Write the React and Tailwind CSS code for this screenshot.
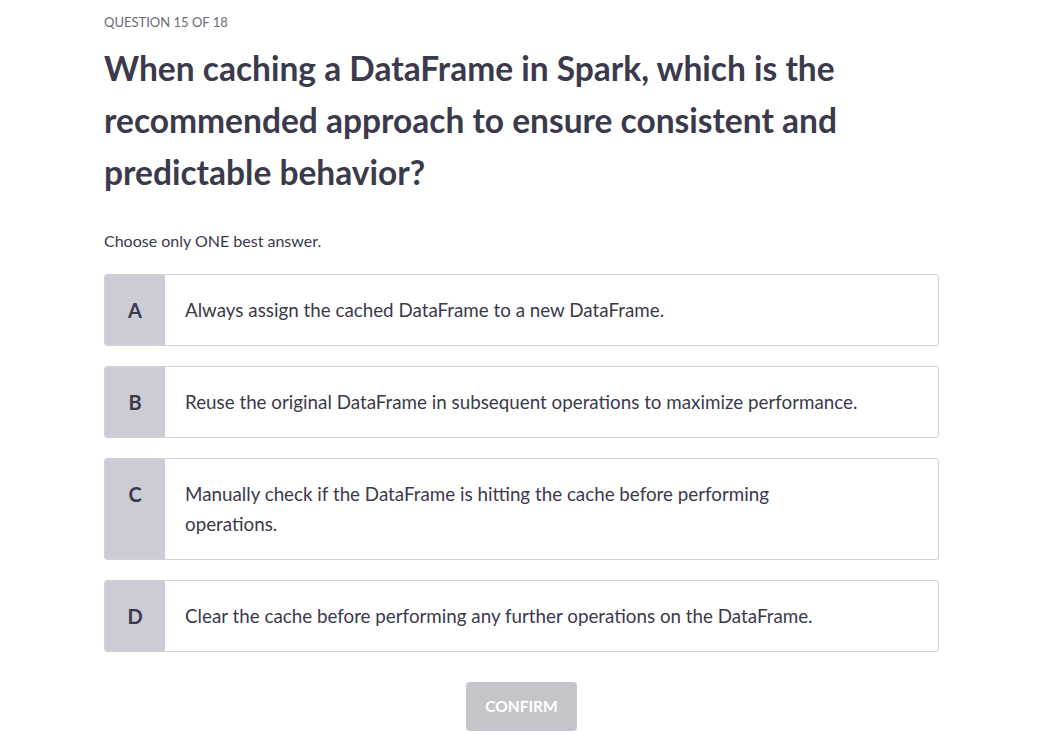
import React from "react";

const options = [
  { k: "A", t: ["Always assign the cached DataFrame to a new DataFrame."] },
  { k: "B", t: ["Reuse the original DataFrame in subsequent operations to maximize performance."] },
  { k: "C", t: ["Manually check if the DataFrame is hitting the cache before performing", "operations."] },
  { k: "D", t: ["Clear the cache before performing any further operations on the DataFrame."] },
];

export default function App() {
  return (
    <div className="min-h-[746px] bg-white text-[#3b3a4c]" style={{ fontFamily: "Lato, 'Noto Sans', sans-serif" }}>
      <div className="ml-[104px] w-[835px] pt-[13px]">
        <div className="text-[13px] leading-[18px] text-[#6b6c78] uppercase">Question 15 of 18</div>
        <h1 className="mt-[11px] text-[33.5px] leading-[52px] font-bold text-[#3b3a4c] pr-[60px]">
          When caching a DataFrame in Spark, which is the recommended approach to ensure consistent and predictable behavior?
        </h1>
        <div className="mt-[33px] text-[16px] leading-[20px] text-[#3b3a4c]">Choose only ONE best answer.</div>
        <div className="mt-[23px] flex flex-col gap-[20px]">
          {options.map((o) => (
            <div key={o.k} className="flex border border-[#d1d2d8] rounded-[3px] overflow-hidden">
              <div className="w-[60px] shrink-0 bg-[#cbccd4] flex justify-center pt-[20px] text-[20px] leading-[30px] font-bold text-[#3b3a4c]">
                {o.k}
              </div>
              <div className="flex-1 pl-[20px] py-[20px] text-[18.8px] leading-[30px] text-[#3b3a4c] whitespace-nowrap">
                {o.t.map((l, i) => (
                  <div key={i}>{l}</div>
                ))}
              </div>
            </div>
          ))}
        </div>
        <div className="mt-[30px] flex justify-center">
          <button className="w-[111px] h-[49px] rounded-[4px] bg-[#c4c5cb] text-white font-bold text-[15.5px] uppercase">
            Confirm
          </button>
        </div>
      </div>
    </div>
  );
}
